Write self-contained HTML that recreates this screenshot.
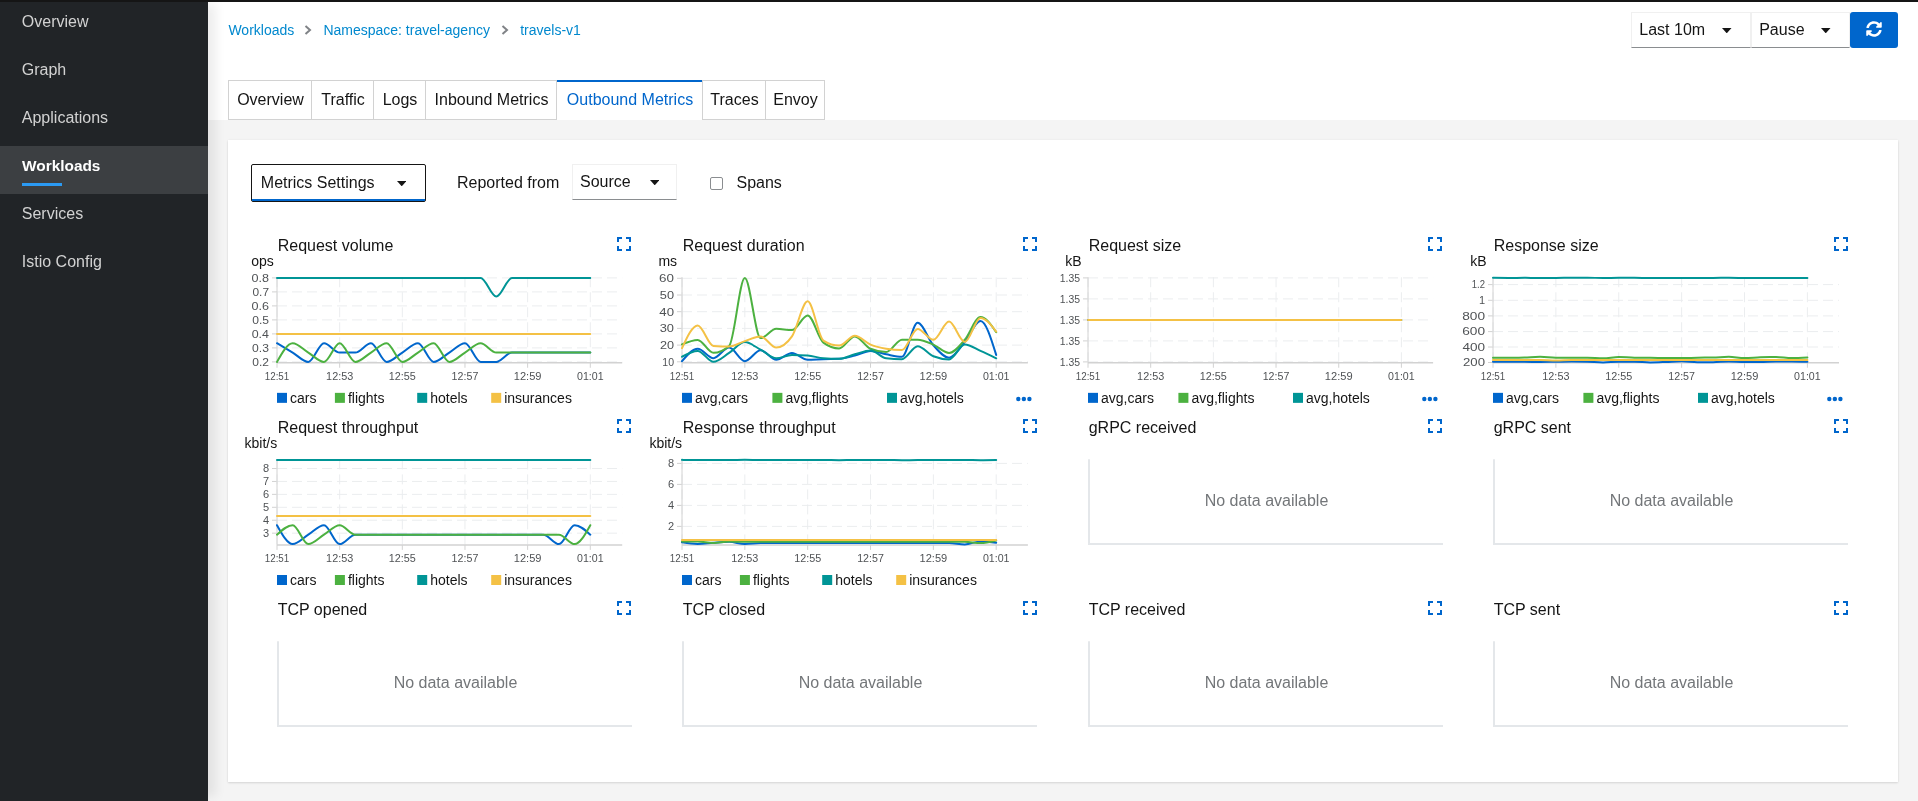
<!DOCTYPE html>
<html><head><meta charset="utf-8"><style>
html,body{margin:0;padding:0;width:1918px;height:801px;overflow:hidden;background:#f4f4f4;font-family:"Liberation Sans", sans-serif;}
.t{position:absolute;white-space:nowrap;font-size:16px;line-height:18px;}
svg text{font-family:"Liberation Sans", sans-serif;}
</style></head><body>
<div style="position:absolute;left:0;top:0;width:1918px;height:801px;will-change:transform">
<div style="position:absolute;left:208px;top:2px;width:1710px;height:118px;background:#fff"></div>
<div style="position:absolute;left:0;top:0;width:208px;height:801px;background:#212427;box-shadow:12px 0 10px -4px rgba(3,3,3,0.07)"></div>
<div style="position:absolute;left:0;top:0;width:1918px;height:2px;background:#151515"></div>
<div class="t" style="left:21.8px;top:12.8px;color:#d2d2d2">Overview</div><div class="t" style="left:21.8px;top:60.8px;color:#d2d2d2">Graph</div><div class="t" style="left:21.8px;top:108.8px;color:#d2d2d2">Applications</div><div style="position:absolute;left:0;top:146px;width:208px;height:48px;background:#3c3f42"></div><div class="t" style="left:22px;top:156.8px;color:#fff;font-weight:bold;font-size:15.4px">Workloads</div><div style="position:absolute;left:22px;top:183px;width:40px;height:3px;background:#2b9af3"></div><div class="t" style="left:21.8px;top:204.8px;color:#d2d2d2">Services</div><div class="t" style="left:21.8px;top:252.8px;color:#d2d2d2">Istio Config</div>
<div class="t" style="left:228.4px;top:21.9px;font-size:14px;line-height:16px;color:#0088ce">Workloads</div>
<div class="t" style="left:323.4px;top:21.9px;font-size:14px;line-height:16px;color:#0088ce">Namespace: travel-agency</div>
<div class="t" style="left:520.2px;top:21.9px;font-size:14px;line-height:16px;color:#0088ce">travels-v1</div>
<svg style="position:absolute;left:304px;top:25px" width="8" height="10"><path d="M1.5,1L6,5L1.5,9" fill="none" stroke="#808387" stroke-width="2"/></svg>
<svg style="position:absolute;left:501px;top:25px" width="8" height="10"><path d="M1.5,1L6,5L1.5,9" fill="none" stroke="#808387" stroke-width="2"/></svg>
<div style="position:absolute;left:1631px;top:12.4px;width:119.5px;height:35.2px;box-sizing:border-box;border:1px solid #f0f0f0;border-bottom-color:#8a8d90;background:#fff"></div>
<div class="t" style="left:1639.3px;top:21.1px;color:#151515">Last 10m</div>
<svg style="position:absolute;left:1722.2px;top:27.6px" width="9.5" height="5.3"><path d="M0,0H9.5L4.75,5.3Z" fill="#151515"/></svg>
<div style="position:absolute;left:1751.4px;top:12.4px;width:99px;height:35.2px;box-sizing:border-box;border:1px solid #f0f0f0;border-bottom-color:#8a8d90;background:#fff"></div>
<div class="t" style="left:1759.2px;top:21.1px;color:#151515">Pause</div>
<svg style="position:absolute;left:1821px;top:27.6px" width="9.5" height="5.3"><path d="M0,0H9.5L4.75,5.3Z" fill="#151515"/></svg>
<div style="position:absolute;left:1850.2px;top:12.2px;width:47.8px;height:35.6px;background:#0066cc;border-radius:3px"></div>
<svg style="position:absolute;left:1866px;top:21px" width="16" height="16" viewBox="0 0 512 512"><path fill="#fff" d="M370.72 133.28C339.458 104.008 298.888 87.962 255.848 88c-77.458.068-144.328 53.178-162.791 126.85-1.344 5.363-6.122 9.15-11.651 9.15H24.103c-7.498 0-13.194-6.807-11.807-14.176C33.933 94.924 134.813 8 256 8c66.448 0 126.791 26.136 171.315 68.685L463.03 40.97C478.149 25.851 504 36.559 504 57.941V192c0 13.255-10.745 24-24 24H345.941c-21.382 0-32.09-25.851-16.971-40.971l41.75-41.749zM32 296h134.059c21.382 0 32.09 25.851 16.971 40.971l-41.75 41.75c31.262 29.273 71.835 45.319 114.876 45.28 77.418-.07 144.315-53.144 162.787-126.849 1.344-5.363 6.122-9.15 11.651-9.15h57.304c7.498 0 13.194 6.807 11.807 14.176C478.067 417.076 377.187 504 256 504c-66.448 0-126.791-26.136-171.315-68.685L48.97 471.03C33.851 486.149 8 475.441 8 454.059V320c0-13.255 10.745-24 24-24z"/></svg>
<div style="position:absolute;left:228px;top:80px;width:597px;height:40px;box-sizing:border-box;border:1px solid #d2d2d2;background:#fff"></div><div style="position:absolute;left:311px;top:80px;width:1px;height:40px;background:#d2d2d2"></div><div style="position:absolute;left:373px;top:80px;width:1px;height:40px;background:#d2d2d2"></div><div style="position:absolute;left:425px;top:80px;width:1px;height:40px;background:#d2d2d2"></div><div style="position:absolute;left:556px;top:80px;width:1px;height:40px;background:#d2d2d2"></div><div style="position:absolute;left:702px;top:80px;width:1px;height:40px;background:#d2d2d2"></div><div style="position:absolute;left:765px;top:80px;width:1px;height:40px;background:#d2d2d2"></div><div style="position:absolute;left:557px;top:119px;width:145px;height:1px;background:#fff"></div><div style="position:absolute;left:557px;top:80px;width:145px;height:2px;background:#0066cc"></div><div class="t" style="left:228.5px;width:84px;text-align:center;top:91.0px;color:#151515">Overview</div><div class="t" style="left:311.5px;width:63px;text-align:center;top:91.0px;color:#151515">Traffic</div><div class="t" style="left:373.5px;width:53px;text-align:center;top:91.0px;color:#151515">Logs</div><div class="t" style="left:425.5px;width:132px;text-align:center;top:91.0px;color:#151515">Inbound Metrics</div><div class="t" style="left:556.5px;width:147px;text-align:center;top:91.0px;color:#0066cc">Outbound Metrics</div><div class="t" style="left:702.5px;width:64px;text-align:center;top:91.0px;color:#151515">Traces</div><div class="t" style="left:765.5px;width:60px;text-align:center;top:91.0px;color:#151515">Envoy</div>
<div style="position:absolute;left:228px;top:140px;width:1670px;height:642px;background:#fff;box-shadow:0 1px 2px 0 rgba(3,3,3,0.12),0 0 2px 0 rgba(3,3,3,0.06)"></div>
<div style="position:absolute;left:251.1px;top:164.1px;width:174.8px;height:37.5px;box-sizing:border-box;border:1px solid #151515;border-radius:2px;background:#fff"></div>
<div style="position:absolute;left:252.1px;top:199.1px;width:172.8px;height:2px;background:#0066cc"></div>
<div class="t" style="left:260.8px;top:173.9px;color:#151515">Metrics Settings</div>
<svg style="position:absolute;left:396.6px;top:181px" width="9.5" height="5.3"><path d="M0,0H9.5L4.75,5.3Z" fill="#151515"/></svg>
<div class="t" style="left:457px;top:174.0px;color:#151515">Reported from</div>
<div style="position:absolute;left:572.4px;top:164.2px;width:105.1px;height:35.5px;box-sizing:border-box;border:1px solid #f0f0f0;border-bottom-color:#8a8d90;background:#fff"></div>
<div class="t" style="left:580px;top:173.3px;color:#151515">Source</div>
<svg style="position:absolute;left:649.5px;top:180px" width="9.5" height="5.3"><path d="M0,0H9.5L4.75,5.3Z" fill="#151515"/></svg>
<div style="position:absolute;left:710.1px;top:177.2px;width:12.6px;height:12.6px;box-sizing:border-box;border:1px solid #8a8d90;border-radius:2px;background:#fff"></div>
<div class="t" style="left:736.5px;top:173.7px;color:#151515">Spans</div>
<svg style="position:absolute;left:0;top:0" width="1918" height="801">
<line x1="277.00" y1="277.90" x2="622.20" y2="277.90" stroke="#ebedef" stroke-width="1" stroke-dasharray="10,5"/>
<line x1="272.00" y1="277.90" x2="277.00" y2="277.90" stroke="#d2d2d2" stroke-width="1"/>
<text x="269.00" y="281.70" font-size="11" fill="#4f5255" text-anchor="end" font-weight="normal" textLength="17.5" lengthAdjust="spacingAndGlyphs">0.8</text>
<line x1="277.00" y1="291.90" x2="622.20" y2="291.90" stroke="#ebedef" stroke-width="1" stroke-dasharray="10,5"/>
<line x1="272.00" y1="291.90" x2="277.00" y2="291.90" stroke="#d2d2d2" stroke-width="1"/>
<text x="269.00" y="295.70" font-size="11" fill="#4f5255" text-anchor="end" font-weight="normal" textLength="16.5" lengthAdjust="spacingAndGlyphs">0.7</text>
<line x1="277.00" y1="305.90" x2="622.20" y2="305.90" stroke="#ebedef" stroke-width="1" stroke-dasharray="10,5"/>
<line x1="272.00" y1="305.90" x2="277.00" y2="305.90" stroke="#d2d2d2" stroke-width="1"/>
<text x="269.00" y="309.70" font-size="11" fill="#4f5255" text-anchor="end" font-weight="normal" textLength="17.5" lengthAdjust="spacingAndGlyphs">0.6</text>
<line x1="277.00" y1="319.90" x2="622.20" y2="319.90" stroke="#ebedef" stroke-width="1" stroke-dasharray="10,5"/>
<line x1="272.00" y1="319.90" x2="277.00" y2="319.90" stroke="#d2d2d2" stroke-width="1"/>
<text x="269.00" y="323.70" font-size="11" fill="#4f5255" text-anchor="end" font-weight="normal" textLength="16.8" lengthAdjust="spacingAndGlyphs">0.5</text>
<line x1="277.00" y1="333.90" x2="622.20" y2="333.90" stroke="#ebedef" stroke-width="1" stroke-dasharray="10,5"/>
<line x1="272.00" y1="333.90" x2="277.00" y2="333.90" stroke="#d2d2d2" stroke-width="1"/>
<text x="269.00" y="337.70" font-size="11" fill="#4f5255" text-anchor="end" font-weight="normal" textLength="17.3" lengthAdjust="spacingAndGlyphs">0.4</text>
<line x1="277.00" y1="347.90" x2="622.20" y2="347.90" stroke="#ebedef" stroke-width="1" stroke-dasharray="10,5"/>
<line x1="272.00" y1="347.90" x2="277.00" y2="347.90" stroke="#d2d2d2" stroke-width="1"/>
<text x="269.00" y="351.70" font-size="11" fill="#4f5255" text-anchor="end" font-weight="normal" textLength="16.9" lengthAdjust="spacingAndGlyphs">0.3</text>
<line x1="277.00" y1="361.90" x2="622.20" y2="361.90" stroke="#ebedef" stroke-width="1" stroke-dasharray="10,5"/>
<line x1="272.00" y1="361.90" x2="277.00" y2="361.90" stroke="#d2d2d2" stroke-width="1"/>
<text x="269.00" y="365.70" font-size="11" fill="#4f5255" text-anchor="end" font-weight="normal" textLength="16.7" lengthAdjust="spacingAndGlyphs">0.2</text>
<line x1="277.00" y1="277.25" x2="277.00" y2="362.75" stroke="#ebedef" stroke-width="1" stroke-dasharray="10,5"/>
<line x1="277.00" y1="362.75" x2="277.00" y2="367.75" stroke="#d2d2d2" stroke-width="1"/>
<text x="277.00" y="380.05" font-size="10.5" fill="#4f5255" text-anchor="middle" font-weight="normal" textLength="24.5" lengthAdjust="spacingAndGlyphs">12:51</text>
<line x1="339.66" y1="277.25" x2="339.66" y2="362.75" stroke="#ebedef" stroke-width="1" stroke-dasharray="10,5"/>
<line x1="339.66" y1="362.75" x2="339.66" y2="367.75" stroke="#d2d2d2" stroke-width="1"/>
<text x="339.66" y="380.05" font-size="10.5" fill="#4f5255" text-anchor="middle" font-weight="normal" textLength="27.1" lengthAdjust="spacingAndGlyphs">12:53</text>
<line x1="402.32" y1="277.25" x2="402.32" y2="362.75" stroke="#ebedef" stroke-width="1" stroke-dasharray="10,5"/>
<line x1="402.32" y1="362.75" x2="402.32" y2="367.75" stroke="#d2d2d2" stroke-width="1"/>
<text x="402.32" y="380.05" font-size="10.5" fill="#4f5255" text-anchor="middle" font-weight="normal" textLength="27.0" lengthAdjust="spacingAndGlyphs">12:55</text>
<line x1="464.98" y1="277.25" x2="464.98" y2="362.75" stroke="#ebedef" stroke-width="1" stroke-dasharray="10,5"/>
<line x1="464.98" y1="362.75" x2="464.98" y2="367.75" stroke="#d2d2d2" stroke-width="1"/>
<text x="464.98" y="380.05" font-size="10.5" fill="#4f5255" text-anchor="middle" font-weight="normal" textLength="26.7" lengthAdjust="spacingAndGlyphs">12:57</text>
<line x1="527.64" y1="277.25" x2="527.64" y2="362.75" stroke="#ebedef" stroke-width="1" stroke-dasharray="10,5"/>
<line x1="527.64" y1="362.75" x2="527.64" y2="367.75" stroke="#d2d2d2" stroke-width="1"/>
<text x="527.64" y="380.05" font-size="10.5" fill="#4f5255" text-anchor="middle" font-weight="normal" textLength="27.7" lengthAdjust="spacingAndGlyphs">12:59</text>
<line x1="590.30" y1="277.25" x2="590.30" y2="362.75" stroke="#ebedef" stroke-width="1" stroke-dasharray="10,5"/>
<line x1="590.30" y1="362.75" x2="590.30" y2="367.75" stroke="#d2d2d2" stroke-width="1"/>
<text x="590.30" y="380.05" font-size="10.5" fill="#4f5255" text-anchor="middle" font-weight="normal" textLength="26.6" lengthAdjust="spacingAndGlyphs">01:01</text>
<line x1="277.00" y1="277.25" x2="277.00" y2="362.75" stroke="#d2d2d2" stroke-width="1"/>
<line x1="277.00" y1="362.75" x2="622.20" y2="362.75" stroke="#d2d2d2" stroke-width="1.5"/>
<path d="M277.00,343.23C282.22,346.34 287.44,349.46 292.67,352.57C297.89,355.68 303.11,361.90 308.33,361.90C313.55,361.90 318.77,343.23 324.00,343.23C329.22,343.23 334.44,352.57 339.66,352.57C344.88,352.57 350.10,352.57 355.32,352.57C360.55,352.57 365.77,343.23 370.99,343.23C376.21,343.23 381.43,361.90 386.65,361.90C391.88,361.90 397.10,355.68 402.32,352.57C407.54,349.46 412.76,343.23 417.99,343.23C423.21,343.23 428.43,361.90 433.65,361.90C438.87,361.90 444.09,355.68 449.31,352.57C454.54,349.46 459.76,343.23 464.98,343.23C470.20,343.23 475.42,361.90 480.64,361.90C485.87,361.90 491.09,361.90 496.31,361.90C501.53,361.90 506.75,352.57 511.98,352.57C517.20,352.57 522.42,352.57 527.64,352.57C532.86,352.57 538.08,352.57 543.31,352.57C548.53,352.57 553.75,352.57 558.97,352.57C564.19,352.57 569.41,352.57 574.63,352.57C579.86,352.57 585.08,352.57 590.30,352.57" fill="none" stroke="#0066cc" stroke-width="2" stroke-linecap="round" stroke-linejoin="round"/>
<path d="M277.00,361.90C282.22,352.57 287.44,343.23 292.67,343.23C297.89,343.23 303.11,349.46 308.33,352.57C313.55,355.68 318.77,361.90 324.00,361.90C329.22,361.90 334.44,343.23 339.66,343.23C344.88,343.23 350.10,361.90 355.32,361.90C360.55,361.90 365.77,355.68 370.99,352.57C376.21,349.46 381.43,343.23 386.65,343.23C391.88,343.23 397.10,361.90 402.32,361.90C407.54,361.90 412.76,355.68 417.99,352.57C423.21,349.46 428.43,343.23 433.65,343.23C438.87,343.23 444.09,361.90 449.31,361.90C454.54,361.90 459.76,355.68 464.98,352.57C470.20,349.46 475.42,343.23 480.64,343.23C485.87,343.23 491.09,352.57 496.31,352.57C501.53,352.57 506.75,352.57 511.98,352.57C517.20,352.57 522.42,352.57 527.64,352.57C532.86,352.57 538.08,352.57 543.31,352.57C548.53,352.57 553.75,352.57 558.97,352.57C564.19,352.57 569.41,352.57 574.63,352.57C579.86,352.57 585.08,352.57 590.30,352.57" fill="none" stroke="#4cb140" stroke-width="2" stroke-linecap="round" stroke-linejoin="round"/>
<path d="M277.00,277.90C282.22,277.90 287.44,277.90 292.67,277.90C297.89,277.90 303.11,277.90 308.33,277.90C313.55,277.90 318.77,277.90 324.00,277.90C329.22,277.90 334.44,277.90 339.66,277.90C344.88,277.90 350.10,277.90 355.32,277.90C360.55,277.90 365.77,277.90 370.99,277.90C376.21,277.90 381.43,277.90 386.65,277.90C391.88,277.90 397.10,277.90 402.32,277.90C407.54,277.90 412.76,277.90 417.99,277.90C423.21,277.90 428.43,277.90 433.65,277.90C438.87,277.90 444.09,277.90 449.31,277.90C454.54,277.90 459.76,277.90 464.98,277.90C470.20,277.90 475.42,277.90 480.64,277.90C485.87,277.90 491.09,296.52 496.31,296.52C501.53,296.52 506.75,277.90 511.98,277.90C517.20,277.90 522.42,277.90 527.64,277.90C532.86,277.90 538.08,277.90 543.31,277.90C548.53,277.90 553.75,277.90 558.97,277.90C564.19,277.90 569.41,277.90 574.63,277.90C579.86,277.90 585.08,277.90 590.30,277.90" fill="none" stroke="#009596" stroke-width="2" stroke-linecap="round" stroke-linejoin="round"/>
<path d="M277.00,333.90C282.22,333.90 287.44,333.90 292.67,333.90C297.89,333.90 303.11,333.90 308.33,333.90C313.55,333.90 318.77,333.90 324.00,333.90C329.22,333.90 334.44,333.90 339.66,333.90C344.88,333.90 350.10,333.90 355.32,333.90C360.55,333.90 365.77,333.90 370.99,333.90C376.21,333.90 381.43,333.90 386.65,333.90C391.88,333.90 397.10,333.90 402.32,333.90C407.54,333.90 412.76,333.90 417.99,333.90C423.21,333.90 428.43,333.90 433.65,333.90C438.87,333.90 444.09,333.90 449.31,333.90C454.54,333.90 459.76,333.90 464.98,333.90C470.20,333.90 475.42,333.90 480.64,333.90C485.87,333.90 491.09,333.90 496.31,333.90C501.53,333.90 506.75,333.90 511.98,333.90C517.20,333.90 522.42,333.90 527.64,333.90C532.86,333.90 538.08,333.90 543.31,333.90C548.53,333.90 553.75,333.90 558.97,333.90C564.19,333.90 569.41,333.90 574.63,333.90C579.86,333.90 585.08,333.90 590.30,333.90" fill="none" stroke="#f4c145" stroke-width="2" stroke-linecap="round" stroke-linejoin="round"/>
<text x="277.70" y="250.85" font-size="16" fill="#151515" text-anchor="start" font-weight="normal" >Request volume</text>
<text x="251.20" y="266.15" font-size="14" fill="#151515" text-anchor="start" font-weight="normal" >ops</text>
<rect x="617" y="237" width="5" height="2" fill="#0066cc"/>
<rect x="617" y="237" width="2" height="5" fill="#0066cc"/>
<rect x="626" y="237" width="5" height="2" fill="#0066cc"/>
<rect x="629" y="237" width="2" height="5" fill="#0066cc"/>
<rect x="617" y="249" width="5" height="2" fill="#0066cc"/>
<rect x="617" y="246" width="2" height="5" fill="#0066cc"/>
<rect x="626" y="249" width="5" height="2" fill="#0066cc"/>
<rect x="629" y="246" width="2" height="5" fill="#0066cc"/>
<rect x="277.00" y="392.85" width="10" height="10" fill="#0066cc"/>
<text x="290.00" y="402.85" font-size="14" fill="#151515" text-anchor="start" font-weight="normal" >cars</text>
<rect x="334.90" y="392.85" width="10" height="10" fill="#4cb140"/>
<text x="347.90" y="402.85" font-size="14" fill="#151515" text-anchor="start" font-weight="normal" >flights</text>
<rect x="417.20" y="392.85" width="10" height="10" fill="#009596"/>
<text x="430.20" y="402.85" font-size="14" fill="#151515" text-anchor="start" font-weight="normal" >hotels</text>
<rect x="491.20" y="392.85" width="10" height="10" fill="#f4c145"/>
<text x="504.20" y="402.85" font-size="14" fill="#151515" text-anchor="start" font-weight="normal" >insurances</text>
<line x1="682.00" y1="278.30" x2="1027.90" y2="278.30" stroke="#ebedef" stroke-width="1" stroke-dasharray="10,5"/>
<line x1="677.00" y1="278.30" x2="682.00" y2="278.30" stroke="#d2d2d2" stroke-width="1"/>
<text x="674.00" y="282.10" font-size="11" fill="#4f5255" text-anchor="end" font-weight="normal" textLength="14.9" lengthAdjust="spacingAndGlyphs">60</text>
<line x1="682.00" y1="295.00" x2="1027.90" y2="295.00" stroke="#ebedef" stroke-width="1" stroke-dasharray="10,5"/>
<line x1="677.00" y1="295.00" x2="682.00" y2="295.00" stroke="#d2d2d2" stroke-width="1"/>
<text x="674.00" y="298.80" font-size="11" fill="#4f5255" text-anchor="end" font-weight="normal" textLength="14.2" lengthAdjust="spacingAndGlyphs">50</text>
<line x1="682.00" y1="311.70" x2="1027.90" y2="311.70" stroke="#ebedef" stroke-width="1" stroke-dasharray="10,5"/>
<line x1="677.00" y1="311.70" x2="682.00" y2="311.70" stroke="#d2d2d2" stroke-width="1"/>
<text x="674.00" y="315.50" font-size="11" fill="#4f5255" text-anchor="end" font-weight="normal" textLength="14.7" lengthAdjust="spacingAndGlyphs">40</text>
<line x1="682.00" y1="328.40" x2="1027.90" y2="328.40" stroke="#ebedef" stroke-width="1" stroke-dasharray="10,5"/>
<line x1="677.00" y1="328.40" x2="682.00" y2="328.40" stroke="#d2d2d2" stroke-width="1"/>
<text x="674.00" y="332.20" font-size="11" fill="#4f5255" text-anchor="end" font-weight="normal" textLength="14.3" lengthAdjust="spacingAndGlyphs">30</text>
<line x1="682.00" y1="345.10" x2="1027.90" y2="345.10" stroke="#ebedef" stroke-width="1" stroke-dasharray="10,5"/>
<line x1="677.00" y1="345.10" x2="682.00" y2="345.10" stroke="#d2d2d2" stroke-width="1"/>
<text x="674.00" y="348.90" font-size="11" fill="#4f5255" text-anchor="end" font-weight="normal" textLength="14.1" lengthAdjust="spacingAndGlyphs">20</text>
<line x1="682.00" y1="361.80" x2="1027.90" y2="361.80" stroke="#ebedef" stroke-width="1" stroke-dasharray="10,5"/>
<line x1="677.00" y1="361.80" x2="682.00" y2="361.80" stroke="#d2d2d2" stroke-width="1"/>
<text x="674.00" y="365.60" font-size="11" fill="#4f5255" text-anchor="end" font-weight="normal" textLength="11.7" lengthAdjust="spacingAndGlyphs">10</text>
<line x1="682.00" y1="277.25" x2="682.00" y2="362.75" stroke="#ebedef" stroke-width="1" stroke-dasharray="10,5"/>
<line x1="682.00" y1="362.75" x2="682.00" y2="367.75" stroke="#d2d2d2" stroke-width="1"/>
<text x="682.00" y="380.05" font-size="10.5" fill="#4f5255" text-anchor="middle" font-weight="normal" textLength="24.5" lengthAdjust="spacingAndGlyphs">12:51</text>
<line x1="744.84" y1="277.25" x2="744.84" y2="362.75" stroke="#ebedef" stroke-width="1" stroke-dasharray="10,5"/>
<line x1="744.84" y1="362.75" x2="744.84" y2="367.75" stroke="#d2d2d2" stroke-width="1"/>
<text x="744.84" y="380.05" font-size="10.5" fill="#4f5255" text-anchor="middle" font-weight="normal" textLength="27.1" lengthAdjust="spacingAndGlyphs">12:53</text>
<line x1="807.68" y1="277.25" x2="807.68" y2="362.75" stroke="#ebedef" stroke-width="1" stroke-dasharray="10,5"/>
<line x1="807.68" y1="362.75" x2="807.68" y2="367.75" stroke="#d2d2d2" stroke-width="1"/>
<text x="807.68" y="380.05" font-size="10.5" fill="#4f5255" text-anchor="middle" font-weight="normal" textLength="27.0" lengthAdjust="spacingAndGlyphs">12:55</text>
<line x1="870.52" y1="277.25" x2="870.52" y2="362.75" stroke="#ebedef" stroke-width="1" stroke-dasharray="10,5"/>
<line x1="870.52" y1="362.75" x2="870.52" y2="367.75" stroke="#d2d2d2" stroke-width="1"/>
<text x="870.52" y="380.05" font-size="10.5" fill="#4f5255" text-anchor="middle" font-weight="normal" textLength="26.7" lengthAdjust="spacingAndGlyphs">12:57</text>
<line x1="933.36" y1="277.25" x2="933.36" y2="362.75" stroke="#ebedef" stroke-width="1" stroke-dasharray="10,5"/>
<line x1="933.36" y1="362.75" x2="933.36" y2="367.75" stroke="#d2d2d2" stroke-width="1"/>
<text x="933.36" y="380.05" font-size="10.5" fill="#4f5255" text-anchor="middle" font-weight="normal" textLength="27.7" lengthAdjust="spacingAndGlyphs">12:59</text>
<line x1="996.20" y1="277.25" x2="996.20" y2="362.75" stroke="#ebedef" stroke-width="1" stroke-dasharray="10,5"/>
<line x1="996.20" y1="362.75" x2="996.20" y2="367.75" stroke="#d2d2d2" stroke-width="1"/>
<text x="996.20" y="380.05" font-size="10.5" fill="#4f5255" text-anchor="middle" font-weight="normal" textLength="26.6" lengthAdjust="spacingAndGlyphs">01:01</text>
<line x1="682.00" y1="277.25" x2="682.00" y2="362.75" stroke="#d2d2d2" stroke-width="1"/>
<line x1="682.00" y1="362.75" x2="1027.90" y2="362.75" stroke="#d2d2d2" stroke-width="1.5"/>
<path d="M682.00,361.13C687.24,354.95 692.47,348.77 697.71,348.77C702.95,348.77 708.18,358.13 713.42,358.13C718.66,358.13 723.89,347.44 729.13,347.44C734.37,347.44 739.60,361.13 744.84,361.13C750.08,361.13 755.31,350.28 760.55,350.28C765.79,350.28 771.02,359.80 776.26,359.80C781.50,359.80 786.73,352.95 791.97,352.95C797.21,352.95 802.44,359.80 807.68,359.80C812.92,359.80 818.15,359.29 823.39,359.13C828.63,358.96 833.86,359.02 839.10,358.79C844.34,358.57 849.57,356.93 854.81,355.62C860.05,354.31 865.28,350.94 870.52,350.94C875.76,350.94 880.99,353.31 886.23,354.29C891.47,355.26 896.70,356.79 901.94,356.79C907.18,356.79 912.41,322.72 917.65,322.72C922.89,322.72 928.12,339.42 933.36,345.27C938.60,351.11 943.83,357.79 949.07,357.79C954.31,357.79 959.54,348.05 964.78,341.93C970.02,335.80 975.25,321.05 980.49,321.05C985.73,321.05 990.96,338.00 996.20,354.95" fill="none" stroke="#0066cc" stroke-width="2" stroke-linecap="round" stroke-linejoin="round"/>
<path d="M682.00,344.43C687.24,342.18 692.47,339.92 697.71,339.92C702.95,339.92 708.18,352.78 713.42,352.78C718.66,352.78 723.89,350.50 729.13,345.94C734.37,341.37 739.60,277.97 744.84,277.97C750.08,277.97 755.31,338.09 760.55,338.09C765.79,338.09 771.02,328.73 776.26,328.73C781.50,328.73 786.73,330.07 791.97,330.07C797.21,330.07 802.44,315.54 807.68,315.54C812.92,315.54 818.15,338.70 823.39,342.60C828.63,346.49 833.86,348.44 839.10,348.44C844.34,348.44 849.57,336.42 854.81,336.42C860.05,336.42 865.28,346.55 870.52,348.77C875.76,351.00 880.99,352.11 886.23,352.11C891.47,352.11 896.70,339.76 901.94,339.76C907.18,339.76 912.41,339.76 917.65,339.76C922.89,339.76 928.12,342.40 933.36,344.60C938.60,346.80 943.83,352.95 949.07,352.95C954.31,352.95 959.54,345.77 964.78,339.76C970.02,333.74 975.25,316.88 980.49,316.88C985.73,316.88 990.96,324.56 996.20,332.24" fill="none" stroke="#4cb140" stroke-width="2" stroke-linecap="round" stroke-linejoin="round"/>
<path d="M682.00,356.79C687.24,353.87 692.47,350.94 697.71,350.94C702.95,350.94 708.18,361.80 713.42,361.80C718.66,361.80 723.89,356.23 729.13,352.95C734.37,349.66 739.60,342.09 744.84,342.09C750.08,342.09 755.31,346.91 760.55,349.61C765.79,352.31 771.02,358.29 776.26,358.29C781.50,358.29 786.73,354.95 791.97,354.95C797.21,354.95 802.44,355.12 807.68,355.45C812.92,355.79 818.15,357.96 823.39,358.29C828.63,358.63 833.86,358.79 839.10,358.79C844.34,358.79 849.57,355.68 854.81,354.29C860.05,352.89 865.28,350.44 870.52,350.44C875.76,350.44 880.99,357.74 886.23,358.29C891.47,358.85 896.70,359.13 901.94,359.13C907.18,359.13 912.41,346.27 917.65,346.27C922.89,346.27 928.12,354.17 933.36,356.29C938.60,358.40 943.83,359.46 949.07,359.46C954.31,359.46 959.54,344.43 964.78,344.43C970.02,344.43 975.25,348.63 980.49,350.94C985.73,353.26 990.96,355.77 996.20,358.29" fill="none" stroke="#009596" stroke-width="2" stroke-linecap="round" stroke-linejoin="round"/>
<path d="M682.00,348.11C687.24,336.75 692.47,325.39 697.71,325.39C702.95,325.39 708.18,345.49 713.42,345.94C718.66,346.38 723.89,346.60 729.13,346.60C734.37,346.60 739.60,342.79 744.84,341.09C750.08,339.39 755.31,336.42 760.55,336.42C765.79,336.42 771.02,347.61 776.26,347.61C781.50,347.61 786.73,343.88 791.97,336.42C797.21,328.96 802.44,301.35 807.68,301.35C812.92,301.35 818.15,337.25 823.39,340.59C828.63,343.93 833.86,345.60 839.10,345.60C844.34,345.60 849.57,335.75 854.81,335.75C860.05,335.75 865.28,342.43 870.52,344.60C875.76,346.77 880.99,347.88 886.23,348.77C891.47,349.66 896.70,350.11 901.94,350.11C907.18,350.11 912.41,328.90 917.65,328.90C922.89,328.90 928.12,339.76 933.36,339.76C938.60,339.76 943.83,321.55 949.07,321.55C954.31,321.55 959.54,341.93 964.78,341.93C970.02,341.93 975.25,317.88 980.49,317.88C985.73,317.88 990.96,324.73 996.20,331.57" fill="none" stroke="#f4c145" stroke-width="2" stroke-linecap="round" stroke-linejoin="round"/>
<text x="682.70" y="250.85" font-size="16" fill="#151515" text-anchor="start" font-weight="normal" >Request duration</text>
<text x="658.40" y="266.15" font-size="14" fill="#151515" text-anchor="start" font-weight="normal" >ms</text>
<rect x="1023" y="237" width="5" height="2" fill="#0066cc"/>
<rect x="1023" y="237" width="2" height="5" fill="#0066cc"/>
<rect x="1032" y="237" width="5" height="2" fill="#0066cc"/>
<rect x="1035" y="237" width="2" height="5" fill="#0066cc"/>
<rect x="1023" y="249" width="5" height="2" fill="#0066cc"/>
<rect x="1023" y="246" width="2" height="5" fill="#0066cc"/>
<rect x="1032" y="249" width="5" height="2" fill="#0066cc"/>
<rect x="1035" y="246" width="2" height="5" fill="#0066cc"/>
<rect x="682.00" y="392.85" width="10" height="10" fill="#0066cc"/>
<text x="695.00" y="402.85" font-size="14" fill="#151515" text-anchor="start" font-weight="normal" >avg,cars</text>
<rect x="772.40" y="392.85" width="10" height="10" fill="#4cb140"/>
<text x="785.40" y="402.85" font-size="14" fill="#151515" text-anchor="start" font-weight="normal" >avg,flights</text>
<rect x="887.00" y="392.85" width="10" height="10" fill="#009596"/>
<text x="900.00" y="402.85" font-size="14" fill="#151515" text-anchor="start" font-weight="normal" >avg,hotels</text>
<circle cx="1018.30" cy="398.95" r="2.2" fill="#0066cc"/>
<circle cx="1023.85" cy="398.95" r="2.2" fill="#0066cc"/>
<circle cx="1029.40" cy="398.95" r="2.2" fill="#0066cc"/>
<line x1="1088.00" y1="277.90" x2="1433.10" y2="277.90" stroke="#ebedef" stroke-width="1" stroke-dasharray="10,5"/>
<line x1="1083.00" y1="277.90" x2="1088.00" y2="277.90" stroke="#d2d2d2" stroke-width="1"/>
<text x="1080.00" y="281.70" font-size="11" fill="#4f5255" text-anchor="end" font-weight="normal" textLength="20.3" lengthAdjust="spacingAndGlyphs">1.35</text>
<line x1="1088.00" y1="298.90" x2="1433.10" y2="298.90" stroke="#ebedef" stroke-width="1" stroke-dasharray="10,5"/>
<line x1="1083.00" y1="298.90" x2="1088.00" y2="298.90" stroke="#d2d2d2" stroke-width="1"/>
<text x="1080.00" y="302.70" font-size="11" fill="#4f5255" text-anchor="end" font-weight="normal" textLength="20.3" lengthAdjust="spacingAndGlyphs">1.35</text>
<line x1="1088.00" y1="319.90" x2="1433.10" y2="319.90" stroke="#ebedef" stroke-width="1" stroke-dasharray="10,5"/>
<line x1="1083.00" y1="319.90" x2="1088.00" y2="319.90" stroke="#d2d2d2" stroke-width="1"/>
<text x="1080.00" y="323.70" font-size="11" fill="#4f5255" text-anchor="end" font-weight="normal" textLength="20.3" lengthAdjust="spacingAndGlyphs">1.35</text>
<line x1="1088.00" y1="340.90" x2="1433.10" y2="340.90" stroke="#ebedef" stroke-width="1" stroke-dasharray="10,5"/>
<line x1="1083.00" y1="340.90" x2="1088.00" y2="340.90" stroke="#d2d2d2" stroke-width="1"/>
<text x="1080.00" y="344.70" font-size="11" fill="#4f5255" text-anchor="end" font-weight="normal" textLength="20.3" lengthAdjust="spacingAndGlyphs">1.35</text>
<line x1="1088.00" y1="361.90" x2="1433.10" y2="361.90" stroke="#ebedef" stroke-width="1" stroke-dasharray="10,5"/>
<line x1="1083.00" y1="361.90" x2="1088.00" y2="361.90" stroke="#d2d2d2" stroke-width="1"/>
<text x="1080.00" y="365.70" font-size="11" fill="#4f5255" text-anchor="end" font-weight="normal" textLength="20.3" lengthAdjust="spacingAndGlyphs">1.35</text>
<line x1="1088.00" y1="277.25" x2="1088.00" y2="362.75" stroke="#ebedef" stroke-width="1" stroke-dasharray="10,5"/>
<line x1="1088.00" y1="362.75" x2="1088.00" y2="367.75" stroke="#d2d2d2" stroke-width="1"/>
<text x="1088.00" y="380.05" font-size="10.5" fill="#4f5255" text-anchor="middle" font-weight="normal" textLength="24.5" lengthAdjust="spacingAndGlyphs">12:51</text>
<line x1="1150.68" y1="277.25" x2="1150.68" y2="362.75" stroke="#ebedef" stroke-width="1" stroke-dasharray="10,5"/>
<line x1="1150.68" y1="362.75" x2="1150.68" y2="367.75" stroke="#d2d2d2" stroke-width="1"/>
<text x="1150.68" y="380.05" font-size="10.5" fill="#4f5255" text-anchor="middle" font-weight="normal" textLength="27.1" lengthAdjust="spacingAndGlyphs">12:53</text>
<line x1="1213.36" y1="277.25" x2="1213.36" y2="362.75" stroke="#ebedef" stroke-width="1" stroke-dasharray="10,5"/>
<line x1="1213.36" y1="362.75" x2="1213.36" y2="367.75" stroke="#d2d2d2" stroke-width="1"/>
<text x="1213.36" y="380.05" font-size="10.5" fill="#4f5255" text-anchor="middle" font-weight="normal" textLength="27.0" lengthAdjust="spacingAndGlyphs">12:55</text>
<line x1="1276.04" y1="277.25" x2="1276.04" y2="362.75" stroke="#ebedef" stroke-width="1" stroke-dasharray="10,5"/>
<line x1="1276.04" y1="362.75" x2="1276.04" y2="367.75" stroke="#d2d2d2" stroke-width="1"/>
<text x="1276.04" y="380.05" font-size="10.5" fill="#4f5255" text-anchor="middle" font-weight="normal" textLength="26.7" lengthAdjust="spacingAndGlyphs">12:57</text>
<line x1="1338.72" y1="277.25" x2="1338.72" y2="362.75" stroke="#ebedef" stroke-width="1" stroke-dasharray="10,5"/>
<line x1="1338.72" y1="362.75" x2="1338.72" y2="367.75" stroke="#d2d2d2" stroke-width="1"/>
<text x="1338.72" y="380.05" font-size="10.5" fill="#4f5255" text-anchor="middle" font-weight="normal" textLength="27.7" lengthAdjust="spacingAndGlyphs">12:59</text>
<line x1="1401.40" y1="277.25" x2="1401.40" y2="362.75" stroke="#ebedef" stroke-width="1" stroke-dasharray="10,5"/>
<line x1="1401.40" y1="362.75" x2="1401.40" y2="367.75" stroke="#d2d2d2" stroke-width="1"/>
<text x="1401.40" y="380.05" font-size="10.5" fill="#4f5255" text-anchor="middle" font-weight="normal" textLength="26.6" lengthAdjust="spacingAndGlyphs">01:01</text>
<line x1="1088.00" y1="277.25" x2="1088.00" y2="362.75" stroke="#d2d2d2" stroke-width="1"/>
<line x1="1088.00" y1="362.75" x2="1433.10" y2="362.75" stroke="#d2d2d2" stroke-width="1.5"/>
<path d="M1088.00,319.90C1093.22,319.90 1098.45,319.90 1103.67,319.90C1108.89,319.90 1114.12,319.90 1119.34,319.90C1124.56,319.90 1129.79,319.90 1135.01,319.90C1140.23,319.90 1145.46,319.90 1150.68,319.90C1155.90,319.90 1161.13,319.90 1166.35,319.90C1171.57,319.90 1176.80,319.90 1182.02,319.90C1187.24,319.90 1192.47,319.90 1197.69,319.90C1202.91,319.90 1208.14,319.90 1213.36,319.90C1218.58,319.90 1223.81,319.90 1229.03,319.90C1234.25,319.90 1239.48,319.90 1244.70,319.90C1249.92,319.90 1255.15,319.90 1260.37,319.90C1265.59,319.90 1270.82,319.90 1276.04,319.90C1281.26,319.90 1286.49,319.90 1291.71,319.90C1296.93,319.90 1302.16,319.90 1307.38,319.90C1312.60,319.90 1317.83,319.90 1323.05,319.90C1328.27,319.90 1333.50,319.90 1338.72,319.90C1343.94,319.90 1349.17,319.90 1354.39,319.90C1359.61,319.90 1364.84,319.90 1370.06,319.90C1375.28,319.90 1380.51,319.90 1385.73,319.90C1390.95,319.90 1396.18,319.90 1401.40,319.90" fill="none" stroke="#009596" stroke-width="2" stroke-linecap="round" stroke-linejoin="round"/>
<path d="M1088.00,319.90C1093.22,319.90 1098.45,319.90 1103.67,319.90C1108.89,319.90 1114.12,319.90 1119.34,319.90C1124.56,319.90 1129.79,319.90 1135.01,319.90C1140.23,319.90 1145.46,319.90 1150.68,319.90C1155.90,319.90 1161.13,319.90 1166.35,319.90C1171.57,319.90 1176.80,319.90 1182.02,319.90C1187.24,319.90 1192.47,319.90 1197.69,319.90C1202.91,319.90 1208.14,319.90 1213.36,319.90C1218.58,319.90 1223.81,319.90 1229.03,319.90C1234.25,319.90 1239.48,319.90 1244.70,319.90C1249.92,319.90 1255.15,319.90 1260.37,319.90C1265.59,319.90 1270.82,319.90 1276.04,319.90C1281.26,319.90 1286.49,319.90 1291.71,319.90C1296.93,319.90 1302.16,319.90 1307.38,319.90C1312.60,319.90 1317.83,319.90 1323.05,319.90C1328.27,319.90 1333.50,319.90 1338.72,319.90C1343.94,319.90 1349.17,319.90 1354.39,319.90C1359.61,319.90 1364.84,319.90 1370.06,319.90C1375.28,319.90 1380.51,319.90 1385.73,319.90C1390.95,319.90 1396.18,319.90 1401.40,319.90" fill="none" stroke="#f4c145" stroke-width="2" stroke-linecap="round" stroke-linejoin="round"/>
<text x="1088.70" y="250.85" font-size="16" fill="#151515" text-anchor="start" font-weight="normal" >Request size</text>
<text x="1065.30" y="266.15" font-size="14" fill="#151515" text-anchor="start" font-weight="normal" >kB</text>
<rect x="1428" y="237" width="5" height="2" fill="#0066cc"/>
<rect x="1428" y="237" width="2" height="5" fill="#0066cc"/>
<rect x="1437" y="237" width="5" height="2" fill="#0066cc"/>
<rect x="1440" y="237" width="2" height="5" fill="#0066cc"/>
<rect x="1428" y="249" width="5" height="2" fill="#0066cc"/>
<rect x="1428" y="246" width="2" height="5" fill="#0066cc"/>
<rect x="1437" y="249" width="5" height="2" fill="#0066cc"/>
<rect x="1440" y="246" width="2" height="5" fill="#0066cc"/>
<rect x="1088.00" y="392.85" width="10" height="10" fill="#0066cc"/>
<text x="1101.00" y="402.85" font-size="14" fill="#151515" text-anchor="start" font-weight="normal" >avg,cars</text>
<rect x="1178.40" y="392.85" width="10" height="10" fill="#4cb140"/>
<text x="1191.40" y="402.85" font-size="14" fill="#151515" text-anchor="start" font-weight="normal" >avg,flights</text>
<rect x="1293.00" y="392.85" width="10" height="10" fill="#009596"/>
<text x="1306.00" y="402.85" font-size="14" fill="#151515" text-anchor="start" font-weight="normal" >avg,hotels</text>
<circle cx="1424.30" cy="398.95" r="2.2" fill="#0066cc"/>
<circle cx="1429.85" cy="398.95" r="2.2" fill="#0066cc"/>
<circle cx="1435.40" cy="398.95" r="2.2" fill="#0066cc"/>
<line x1="1493.00" y1="284.60" x2="1839.00" y2="284.60" stroke="#ebedef" stroke-width="1" stroke-dasharray="10,5"/>
<line x1="1488.00" y1="284.60" x2="1493.00" y2="284.60" stroke="#d2d2d2" stroke-width="1"/>
<text x="1485.00" y="288.40" font-size="11" fill="#4f5255" text-anchor="end" font-weight="normal" textLength="13.2" lengthAdjust="spacingAndGlyphs">1.2</text>
<line x1="1493.00" y1="300.30" x2="1839.00" y2="300.30" stroke="#ebedef" stroke-width="1" stroke-dasharray="10,5"/>
<line x1="1488.00" y1="300.30" x2="1493.00" y2="300.30" stroke="#d2d2d2" stroke-width="1"/>
<text x="1485.00" y="304.10" font-size="11" fill="#4f5255" text-anchor="end" font-weight="normal" >1</text>
<line x1="1493.00" y1="315.90" x2="1839.00" y2="315.90" stroke="#ebedef" stroke-width="1" stroke-dasharray="10,5"/>
<line x1="1488.00" y1="315.90" x2="1493.00" y2="315.90" stroke="#d2d2d2" stroke-width="1"/>
<text x="1485.00" y="319.70" font-size="11" fill="#4f5255" text-anchor="end" font-weight="normal" textLength="22.8" lengthAdjust="spacingAndGlyphs">800</text>
<line x1="1493.00" y1="331.60" x2="1839.00" y2="331.60" stroke="#ebedef" stroke-width="1" stroke-dasharray="10,5"/>
<line x1="1488.00" y1="331.60" x2="1493.00" y2="331.60" stroke="#d2d2d2" stroke-width="1"/>
<text x="1485.00" y="335.40" font-size="11" fill="#4f5255" text-anchor="end" font-weight="normal" textLength="22.8" lengthAdjust="spacingAndGlyphs">600</text>
<line x1="1493.00" y1="347.00" x2="1839.00" y2="347.00" stroke="#ebedef" stroke-width="1" stroke-dasharray="10,5"/>
<line x1="1488.00" y1="347.00" x2="1493.00" y2="347.00" stroke="#d2d2d2" stroke-width="1"/>
<text x="1485.00" y="350.80" font-size="11" fill="#4f5255" text-anchor="end" font-weight="normal" textLength="22.6" lengthAdjust="spacingAndGlyphs">400</text>
<line x1="1493.00" y1="362.50" x2="1839.00" y2="362.50" stroke="#ebedef" stroke-width="1" stroke-dasharray="10,5"/>
<line x1="1488.00" y1="362.50" x2="1493.00" y2="362.50" stroke="#d2d2d2" stroke-width="1"/>
<text x="1485.00" y="366.30" font-size="11" fill="#4f5255" text-anchor="end" font-weight="normal" textLength="22.0" lengthAdjust="spacingAndGlyphs">200</text>
<line x1="1493.00" y1="277.25" x2="1493.00" y2="362.75" stroke="#ebedef" stroke-width="1" stroke-dasharray="10,5"/>
<line x1="1493.00" y1="362.75" x2="1493.00" y2="367.75" stroke="#d2d2d2" stroke-width="1"/>
<text x="1493.00" y="380.05" font-size="10.5" fill="#4f5255" text-anchor="middle" font-weight="normal" textLength="24.5" lengthAdjust="spacingAndGlyphs">12:51</text>
<line x1="1555.88" y1="277.25" x2="1555.88" y2="362.75" stroke="#ebedef" stroke-width="1" stroke-dasharray="10,5"/>
<line x1="1555.88" y1="362.75" x2="1555.88" y2="367.75" stroke="#d2d2d2" stroke-width="1"/>
<text x="1555.88" y="380.05" font-size="10.5" fill="#4f5255" text-anchor="middle" font-weight="normal" textLength="27.1" lengthAdjust="spacingAndGlyphs">12:53</text>
<line x1="1618.76" y1="277.25" x2="1618.76" y2="362.75" stroke="#ebedef" stroke-width="1" stroke-dasharray="10,5"/>
<line x1="1618.76" y1="362.75" x2="1618.76" y2="367.75" stroke="#d2d2d2" stroke-width="1"/>
<text x="1618.76" y="380.05" font-size="10.5" fill="#4f5255" text-anchor="middle" font-weight="normal" textLength="27.0" lengthAdjust="spacingAndGlyphs">12:55</text>
<line x1="1681.64" y1="277.25" x2="1681.64" y2="362.75" stroke="#ebedef" stroke-width="1" stroke-dasharray="10,5"/>
<line x1="1681.64" y1="362.75" x2="1681.64" y2="367.75" stroke="#d2d2d2" stroke-width="1"/>
<text x="1681.64" y="380.05" font-size="10.5" fill="#4f5255" text-anchor="middle" font-weight="normal" textLength="26.7" lengthAdjust="spacingAndGlyphs">12:57</text>
<line x1="1744.52" y1="277.25" x2="1744.52" y2="362.75" stroke="#ebedef" stroke-width="1" stroke-dasharray="10,5"/>
<line x1="1744.52" y1="362.75" x2="1744.52" y2="367.75" stroke="#d2d2d2" stroke-width="1"/>
<text x="1744.52" y="380.05" font-size="10.5" fill="#4f5255" text-anchor="middle" font-weight="normal" textLength="27.7" lengthAdjust="spacingAndGlyphs">12:59</text>
<line x1="1807.40" y1="277.25" x2="1807.40" y2="362.75" stroke="#ebedef" stroke-width="1" stroke-dasharray="10,5"/>
<line x1="1807.40" y1="362.75" x2="1807.40" y2="367.75" stroke="#d2d2d2" stroke-width="1"/>
<text x="1807.40" y="380.05" font-size="10.5" fill="#4f5255" text-anchor="middle" font-weight="normal" textLength="26.6" lengthAdjust="spacingAndGlyphs">01:01</text>
<line x1="1493.00" y1="277.25" x2="1493.00" y2="362.75" stroke="#d2d2d2" stroke-width="1"/>
<line x1="1493.00" y1="362.75" x2="1839.00" y2="362.75" stroke="#d2d2d2" stroke-width="1.5"/>
<path d="M1493.00,361.79C1498.24,361.79 1503.48,361.79 1508.72,361.79C1513.96,361.79 1519.20,361.79 1524.44,361.79C1529.68,361.79 1534.92,361.97 1540.16,361.97C1545.40,361.97 1550.64,361.85 1555.88,361.79C1561.12,361.74 1566.36,361.62 1571.60,361.62C1576.84,361.62 1582.08,361.68 1587.32,361.79C1592.56,361.91 1597.80,362.39 1603.04,362.39C1608.28,362.39 1613.52,361.79 1618.76,361.79C1624.00,361.79 1629.24,361.79 1634.48,361.79C1639.72,361.79 1644.96,362.39 1650.20,362.39C1655.44,362.39 1660.68,362.15 1665.92,361.97C1671.16,361.78 1676.40,361.28 1681.64,361.28C1686.88,361.28 1692.12,362.14 1697.36,362.14C1702.60,362.14 1707.84,362.14 1713.08,362.14C1718.32,362.14 1723.56,361.54 1728.80,361.54C1734.04,361.54 1739.28,361.97 1744.52,361.97C1749.76,361.97 1755.00,361.97 1760.24,361.97C1765.48,361.97 1770.72,361.54 1775.96,361.54C1781.20,361.54 1786.44,361.54 1791.68,361.54C1796.92,361.54 1802.16,361.67 1807.40,361.79" fill="none" stroke="#0066cc" stroke-width="2" stroke-linecap="round" stroke-linejoin="round"/>
<path d="M1493.00,357.86C1498.24,357.86 1503.48,357.86 1508.72,357.86C1513.96,357.86 1519.20,357.69 1524.44,357.52C1529.68,357.35 1534.92,356.84 1540.16,356.84C1545.40,356.84 1550.64,357.69 1555.88,357.69C1561.12,357.69 1566.36,357.69 1571.60,357.69C1576.84,357.69 1582.08,357.69 1587.32,357.69C1592.56,357.69 1597.80,358.29 1603.04,358.29C1608.28,358.29 1613.52,357.01 1618.76,357.01C1624.00,357.01 1629.24,357.69 1634.48,357.69C1639.72,357.69 1644.96,357.69 1650.20,357.69C1655.44,357.69 1660.68,358.12 1665.92,358.12C1671.16,358.12 1676.40,358.12 1681.64,358.12C1686.88,358.12 1692.12,357.79 1697.36,357.69C1702.60,357.59 1707.84,357.64 1713.08,357.52C1718.32,357.41 1723.56,356.84 1728.80,356.84C1734.04,356.84 1739.28,358.12 1744.52,358.12C1749.76,358.12 1755.00,357.44 1760.24,357.26C1765.48,357.09 1770.72,357.01 1775.96,357.01C1781.20,357.01 1786.44,358.12 1791.68,358.12C1796.92,358.12 1802.16,357.82 1807.40,357.52" fill="none" stroke="#4cb140" stroke-width="2" stroke-linecap="round" stroke-linejoin="round"/>
<path d="M1493.00,277.82C1498.24,277.87 1503.48,277.91 1508.72,277.91C1513.96,277.91 1519.20,277.86 1524.44,277.86C1529.68,277.86 1534.92,277.93 1540.16,277.93C1545.40,277.94 1550.64,277.94 1555.88,277.94C1561.12,277.94 1566.36,277.78 1571.60,277.77C1576.84,277.76 1582.08,277.75 1587.32,277.75C1592.56,277.75 1597.80,278.00 1603.04,278.00C1608.28,278.00 1613.52,277.83 1618.76,277.83C1624.00,277.82 1629.24,277.82 1634.48,277.82C1639.72,277.82 1644.96,278.05 1650.20,278.05C1655.44,278.05 1660.68,277.89 1665.92,277.89C1671.16,277.89 1676.40,278.00 1681.64,278.00C1686.88,278.00 1692.12,277.89 1697.36,277.89C1702.60,277.89 1707.84,277.94 1713.08,277.94C1718.32,277.94 1723.56,277.80 1728.80,277.80C1734.04,277.80 1739.28,277.90 1744.52,277.94C1749.76,277.98 1755.00,278.01 1760.24,278.01C1765.48,278.01 1770.72,277.91 1775.96,277.91C1781.20,277.91 1786.44,277.97 1791.68,277.97C1796.92,277.97 1802.16,277.96 1807.40,277.95" fill="none" stroke="#009596" stroke-width="2" stroke-linecap="round" stroke-linejoin="round"/>
<path d="M1493.00,360.09C1498.24,360.09 1503.48,360.09 1508.72,360.09C1513.96,360.09 1519.20,360.09 1524.44,360.09C1529.68,360.09 1534.92,360.09 1540.16,360.09C1545.40,360.09 1550.64,360.51 1555.88,360.51C1561.12,360.51 1566.36,360.09 1571.60,360.09C1576.84,360.09 1582.08,360.09 1587.32,360.09C1592.56,360.09 1597.80,360.09 1603.04,360.09C1608.28,360.09 1613.52,360.09 1618.76,360.09C1624.00,360.09 1629.24,360.09 1634.48,360.09C1639.72,360.09 1644.96,360.09 1650.20,360.09C1655.44,360.09 1660.68,360.09 1665.92,360.09C1671.16,360.09 1676.40,360.09 1681.64,360.09C1686.88,360.09 1692.12,360.09 1697.36,360.09C1702.60,360.09 1707.84,360.09 1713.08,360.09C1718.32,360.09 1723.56,360.09 1728.80,360.09C1734.04,360.09 1739.28,360.09 1744.52,360.09C1749.76,360.09 1755.00,360.09 1760.24,360.09C1765.48,360.09 1770.72,360.09 1775.96,360.09C1781.20,360.09 1786.44,360.09 1791.68,360.09C1796.92,360.09 1802.16,360.09 1807.40,360.09" fill="none" stroke="#f4c145" stroke-width="2" stroke-linecap="round" stroke-linejoin="round"/>
<text x="1493.70" y="250.85" font-size="16" fill="#151515" text-anchor="start" font-weight="normal" >Response size</text>
<text x="1470.30" y="266.15" font-size="14" fill="#151515" text-anchor="start" font-weight="normal" >kB</text>
<rect x="1834" y="237" width="5" height="2" fill="#0066cc"/>
<rect x="1834" y="237" width="2" height="5" fill="#0066cc"/>
<rect x="1843" y="237" width="5" height="2" fill="#0066cc"/>
<rect x="1846" y="237" width="2" height="5" fill="#0066cc"/>
<rect x="1834" y="249" width="5" height="2" fill="#0066cc"/>
<rect x="1834" y="246" width="2" height="5" fill="#0066cc"/>
<rect x="1843" y="249" width="5" height="2" fill="#0066cc"/>
<rect x="1846" y="246" width="2" height="5" fill="#0066cc"/>
<rect x="1493.00" y="392.85" width="10" height="10" fill="#0066cc"/>
<text x="1506.00" y="402.85" font-size="14" fill="#151515" text-anchor="start" font-weight="normal" >avg,cars</text>
<rect x="1583.40" y="392.85" width="10" height="10" fill="#4cb140"/>
<text x="1596.40" y="402.85" font-size="14" fill="#151515" text-anchor="start" font-weight="normal" >avg,flights</text>
<rect x="1698.00" y="392.85" width="10" height="10" fill="#009596"/>
<text x="1711.00" y="402.85" font-size="14" fill="#151515" text-anchor="start" font-weight="normal" >avg,hotels</text>
<circle cx="1829.30" cy="398.95" r="2.2" fill="#0066cc"/>
<circle cx="1834.85" cy="398.95" r="2.2" fill="#0066cc"/>
<circle cx="1840.40" cy="398.95" r="2.2" fill="#0066cc"/>
<line x1="277.00" y1="468.51" x2="622.20" y2="468.51" stroke="#ebedef" stroke-width="1" stroke-dasharray="10,5"/>
<line x1="272.00" y1="468.51" x2="277.00" y2="468.51" stroke="#d2d2d2" stroke-width="1"/>
<text x="269.00" y="472.31" font-size="11" fill="#4f5255" text-anchor="end" font-weight="normal" >8</text>
<line x1="277.00" y1="481.44" x2="622.20" y2="481.44" stroke="#ebedef" stroke-width="1" stroke-dasharray="10,5"/>
<line x1="272.00" y1="481.44" x2="277.00" y2="481.44" stroke="#d2d2d2" stroke-width="1"/>
<text x="269.00" y="485.24" font-size="11" fill="#4f5255" text-anchor="end" font-weight="normal" >7</text>
<line x1="277.00" y1="494.37" x2="622.20" y2="494.37" stroke="#ebedef" stroke-width="1" stroke-dasharray="10,5"/>
<line x1="272.00" y1="494.37" x2="277.00" y2="494.37" stroke="#d2d2d2" stroke-width="1"/>
<text x="269.00" y="498.17" font-size="11" fill="#4f5255" text-anchor="end" font-weight="normal" >6</text>
<line x1="277.00" y1="507.30" x2="622.20" y2="507.30" stroke="#ebedef" stroke-width="1" stroke-dasharray="10,5"/>
<line x1="272.00" y1="507.30" x2="277.00" y2="507.30" stroke="#d2d2d2" stroke-width="1"/>
<text x="269.00" y="511.10" font-size="11" fill="#4f5255" text-anchor="end" font-weight="normal" >5</text>
<line x1="277.00" y1="520.23" x2="622.20" y2="520.23" stroke="#ebedef" stroke-width="1" stroke-dasharray="10,5"/>
<line x1="272.00" y1="520.23" x2="277.00" y2="520.23" stroke="#d2d2d2" stroke-width="1"/>
<text x="269.00" y="524.03" font-size="11" fill="#4f5255" text-anchor="end" font-weight="normal" >4</text>
<line x1="277.00" y1="533.16" x2="622.20" y2="533.16" stroke="#ebedef" stroke-width="1" stroke-dasharray="10,5"/>
<line x1="272.00" y1="533.16" x2="277.00" y2="533.16" stroke="#d2d2d2" stroke-width="1"/>
<text x="269.00" y="536.96" font-size="11" fill="#4f5255" text-anchor="end" font-weight="normal" >3</text>
<line x1="277.00" y1="459.40" x2="277.00" y2="544.90" stroke="#ebedef" stroke-width="1" stroke-dasharray="10,5"/>
<line x1="277.00" y1="544.90" x2="277.00" y2="549.90" stroke="#d2d2d2" stroke-width="1"/>
<text x="277.00" y="562.20" font-size="10.5" fill="#4f5255" text-anchor="middle" font-weight="normal" textLength="24.5" lengthAdjust="spacingAndGlyphs">12:51</text>
<line x1="339.66" y1="459.40" x2="339.66" y2="544.90" stroke="#ebedef" stroke-width="1" stroke-dasharray="10,5"/>
<line x1="339.66" y1="544.90" x2="339.66" y2="549.90" stroke="#d2d2d2" stroke-width="1"/>
<text x="339.66" y="562.20" font-size="10.5" fill="#4f5255" text-anchor="middle" font-weight="normal" textLength="27.1" lengthAdjust="spacingAndGlyphs">12:53</text>
<line x1="402.32" y1="459.40" x2="402.32" y2="544.90" stroke="#ebedef" stroke-width="1" stroke-dasharray="10,5"/>
<line x1="402.32" y1="544.90" x2="402.32" y2="549.90" stroke="#d2d2d2" stroke-width="1"/>
<text x="402.32" y="562.20" font-size="10.5" fill="#4f5255" text-anchor="middle" font-weight="normal" textLength="27.0" lengthAdjust="spacingAndGlyphs">12:55</text>
<line x1="464.98" y1="459.40" x2="464.98" y2="544.90" stroke="#ebedef" stroke-width="1" stroke-dasharray="10,5"/>
<line x1="464.98" y1="544.90" x2="464.98" y2="549.90" stroke="#d2d2d2" stroke-width="1"/>
<text x="464.98" y="562.20" font-size="10.5" fill="#4f5255" text-anchor="middle" font-weight="normal" textLength="26.7" lengthAdjust="spacingAndGlyphs">12:57</text>
<line x1="527.64" y1="459.40" x2="527.64" y2="544.90" stroke="#ebedef" stroke-width="1" stroke-dasharray="10,5"/>
<line x1="527.64" y1="544.90" x2="527.64" y2="549.90" stroke="#d2d2d2" stroke-width="1"/>
<text x="527.64" y="562.20" font-size="10.5" fill="#4f5255" text-anchor="middle" font-weight="normal" textLength="27.7" lengthAdjust="spacingAndGlyphs">12:59</text>
<line x1="590.30" y1="459.40" x2="590.30" y2="544.90" stroke="#ebedef" stroke-width="1" stroke-dasharray="10,5"/>
<line x1="590.30" y1="544.90" x2="590.30" y2="549.90" stroke="#d2d2d2" stroke-width="1"/>
<text x="590.30" y="562.20" font-size="10.5" fill="#4f5255" text-anchor="middle" font-weight="normal" textLength="26.6" lengthAdjust="spacingAndGlyphs">01:01</text>
<line x1="277.00" y1="459.40" x2="277.00" y2="544.90" stroke="#d2d2d2" stroke-width="1"/>
<line x1="277.00" y1="544.90" x2="622.20" y2="544.90" stroke="#d2d2d2" stroke-width="1.5"/>
<path d="M277.00,525.23C282.22,534.67 287.44,544.11 292.67,544.11C297.89,544.11 303.11,537.82 308.33,534.67C313.55,531.53 318.77,525.23 324.00,525.23C329.22,525.23 334.44,544.11 339.66,544.11C344.88,544.11 350.10,534.67 355.32,534.67C360.55,534.67 365.77,534.67 370.99,534.67C376.21,534.67 381.43,534.67 386.65,534.67C391.88,534.67 397.10,534.67 402.32,534.67C407.54,534.67 412.76,534.67 417.99,534.67C423.21,534.67 428.43,534.67 433.65,534.67C438.87,534.67 444.09,534.67 449.31,534.67C454.54,534.67 459.76,534.67 464.98,534.67C470.20,534.67 475.42,534.67 480.64,534.67C485.87,534.67 491.09,534.67 496.31,534.67C501.53,534.67 506.75,534.67 511.98,534.67C517.20,534.67 522.42,534.67 527.64,534.67C532.86,534.67 538.08,534.67 543.31,534.67C548.53,534.67 553.75,544.11 558.97,544.11C564.19,544.11 569.41,525.23 574.63,525.23C579.86,525.23 585.08,529.95 590.30,534.67" fill="none" stroke="#0066cc" stroke-width="2" stroke-linecap="round" stroke-linejoin="round"/>
<path d="M277.00,534.67C282.22,529.95 287.44,525.23 292.67,525.23C297.89,525.23 303.11,544.11 308.33,544.11C313.55,544.11 318.77,537.82 324.00,534.67C329.22,531.53 334.44,525.23 339.66,525.23C344.88,525.23 350.10,534.67 355.32,534.67C360.55,534.67 365.77,534.67 370.99,534.67C376.21,534.67 381.43,534.67 386.65,534.67C391.88,534.67 397.10,534.67 402.32,534.67C407.54,534.67 412.76,534.67 417.99,534.67C423.21,534.67 428.43,534.67 433.65,534.67C438.87,534.67 444.09,534.67 449.31,534.67C454.54,534.67 459.76,534.67 464.98,534.67C470.20,534.67 475.42,534.67 480.64,534.67C485.87,534.67 491.09,534.67 496.31,534.67C501.53,534.67 506.75,534.67 511.98,534.67C517.20,534.67 522.42,534.67 527.64,534.67C532.86,534.67 538.08,534.67 543.31,534.67C548.53,534.67 553.75,534.67 558.97,534.67C564.19,534.67 569.41,544.11 574.63,544.11C579.86,544.11 585.08,534.67 590.30,525.23" fill="none" stroke="#4cb140" stroke-width="2" stroke-linecap="round" stroke-linejoin="round"/>
<path d="M277.00,460.00C282.22,460.00 287.44,460.00 292.67,460.00C297.89,460.00 303.11,460.00 308.33,460.00C313.55,460.00 318.77,460.00 324.00,460.00C329.22,460.00 334.44,460.00 339.66,460.00C344.88,460.00 350.10,460.00 355.32,460.00C360.55,460.00 365.77,460.00 370.99,460.00C376.21,460.00 381.43,460.00 386.65,460.00C391.88,460.00 397.10,460.00 402.32,460.00C407.54,460.00 412.76,460.00 417.99,460.00C423.21,460.00 428.43,460.00 433.65,460.00C438.87,460.00 444.09,460.00 449.31,460.00C454.54,460.00 459.76,460.00 464.98,460.00C470.20,460.00 475.42,460.00 480.64,460.00C485.87,460.00 491.09,460.00 496.31,460.00C501.53,460.00 506.75,460.00 511.98,460.00C517.20,460.00 522.42,460.00 527.64,460.00C532.86,460.00 538.08,460.00 543.31,460.00C548.53,460.00 553.75,460.00 558.97,460.00C564.19,460.00 569.41,460.00 574.63,460.00C579.86,460.00 585.08,460.00 590.30,460.00" fill="none" stroke="#009596" stroke-width="2" stroke-linecap="round" stroke-linejoin="round"/>
<path d="M277.00,516.00C282.22,516.00 287.44,516.00 292.67,516.00C297.89,516.00 303.11,516.00 308.33,516.00C313.55,516.00 318.77,516.00 324.00,516.00C329.22,516.00 334.44,516.00 339.66,516.00C344.88,516.00 350.10,516.00 355.32,516.00C360.55,516.00 365.77,516.00 370.99,516.00C376.21,516.00 381.43,516.00 386.65,516.00C391.88,516.00 397.10,516.00 402.32,516.00C407.54,516.00 412.76,516.00 417.99,516.00C423.21,516.00 428.43,516.00 433.65,516.00C438.87,516.00 444.09,516.00 449.31,516.00C454.54,516.00 459.76,516.00 464.98,516.00C470.20,516.00 475.42,516.00 480.64,516.00C485.87,516.00 491.09,516.00 496.31,516.00C501.53,516.00 506.75,516.00 511.98,516.00C517.20,516.00 522.42,516.00 527.64,516.00C532.86,516.00 538.08,516.00 543.31,516.00C548.53,516.00 553.75,516.00 558.97,516.00C564.19,516.00 569.41,516.00 574.63,516.00C579.86,516.00 585.08,516.00 590.30,516.00" fill="none" stroke="#f4c145" stroke-width="2" stroke-linecap="round" stroke-linejoin="round"/>
<text x="277.70" y="433.00" font-size="16" fill="#151515" text-anchor="start" font-weight="normal" >Request throughput</text>
<text x="244.50" y="448.30" font-size="14" fill="#151515" text-anchor="start" font-weight="normal" >kbit/s</text>
<rect x="617" y="419" width="5" height="2" fill="#0066cc"/>
<rect x="617" y="419" width="2" height="5" fill="#0066cc"/>
<rect x="626" y="419" width="5" height="2" fill="#0066cc"/>
<rect x="629" y="419" width="2" height="5" fill="#0066cc"/>
<rect x="617" y="431" width="5" height="2" fill="#0066cc"/>
<rect x="617" y="428" width="2" height="5" fill="#0066cc"/>
<rect x="626" y="431" width="5" height="2" fill="#0066cc"/>
<rect x="629" y="428" width="2" height="5" fill="#0066cc"/>
<rect x="277.00" y="575.00" width="10" height="10" fill="#0066cc"/>
<text x="290.00" y="585.00" font-size="14" fill="#151515" text-anchor="start" font-weight="normal" >cars</text>
<rect x="334.90" y="575.00" width="10" height="10" fill="#4cb140"/>
<text x="347.90" y="585.00" font-size="14" fill="#151515" text-anchor="start" font-weight="normal" >flights</text>
<rect x="417.20" y="575.00" width="10" height="10" fill="#009596"/>
<text x="430.20" y="585.00" font-size="14" fill="#151515" text-anchor="start" font-weight="normal" >hotels</text>
<rect x="491.20" y="575.00" width="10" height="10" fill="#f4c145"/>
<text x="504.20" y="585.00" font-size="14" fill="#151515" text-anchor="start" font-weight="normal" >insurances</text>
<line x1="682.00" y1="463.40" x2="1027.90" y2="463.40" stroke="#ebedef" stroke-width="1" stroke-dasharray="10,5"/>
<line x1="677.00" y1="463.40" x2="682.00" y2="463.40" stroke="#d2d2d2" stroke-width="1"/>
<text x="674.00" y="467.20" font-size="11" fill="#4f5255" text-anchor="end" font-weight="normal" >8</text>
<line x1="682.00" y1="484.40" x2="1027.90" y2="484.40" stroke="#ebedef" stroke-width="1" stroke-dasharray="10,5"/>
<line x1="677.00" y1="484.40" x2="682.00" y2="484.40" stroke="#d2d2d2" stroke-width="1"/>
<text x="674.00" y="488.20" font-size="11" fill="#4f5255" text-anchor="end" font-weight="normal" >6</text>
<line x1="682.00" y1="505.40" x2="1027.90" y2="505.40" stroke="#ebedef" stroke-width="1" stroke-dasharray="10,5"/>
<line x1="677.00" y1="505.40" x2="682.00" y2="505.40" stroke="#d2d2d2" stroke-width="1"/>
<text x="674.00" y="509.20" font-size="11" fill="#4f5255" text-anchor="end" font-weight="normal" >4</text>
<line x1="682.00" y1="526.40" x2="1027.90" y2="526.40" stroke="#ebedef" stroke-width="1" stroke-dasharray="10,5"/>
<line x1="677.00" y1="526.40" x2="682.00" y2="526.40" stroke="#d2d2d2" stroke-width="1"/>
<text x="674.00" y="530.20" font-size="11" fill="#4f5255" text-anchor="end" font-weight="normal" >2</text>
<line x1="682.00" y1="459.40" x2="682.00" y2="544.90" stroke="#ebedef" stroke-width="1" stroke-dasharray="10,5"/>
<line x1="682.00" y1="544.90" x2="682.00" y2="549.90" stroke="#d2d2d2" stroke-width="1"/>
<text x="682.00" y="562.20" font-size="10.5" fill="#4f5255" text-anchor="middle" font-weight="normal" textLength="24.5" lengthAdjust="spacingAndGlyphs">12:51</text>
<line x1="744.84" y1="459.40" x2="744.84" y2="544.90" stroke="#ebedef" stroke-width="1" stroke-dasharray="10,5"/>
<line x1="744.84" y1="544.90" x2="744.84" y2="549.90" stroke="#d2d2d2" stroke-width="1"/>
<text x="744.84" y="562.20" font-size="10.5" fill="#4f5255" text-anchor="middle" font-weight="normal" textLength="27.1" lengthAdjust="spacingAndGlyphs">12:53</text>
<line x1="807.68" y1="459.40" x2="807.68" y2="544.90" stroke="#ebedef" stroke-width="1" stroke-dasharray="10,5"/>
<line x1="807.68" y1="544.90" x2="807.68" y2="549.90" stroke="#d2d2d2" stroke-width="1"/>
<text x="807.68" y="562.20" font-size="10.5" fill="#4f5255" text-anchor="middle" font-weight="normal" textLength="27.0" lengthAdjust="spacingAndGlyphs">12:55</text>
<line x1="870.52" y1="459.40" x2="870.52" y2="544.90" stroke="#ebedef" stroke-width="1" stroke-dasharray="10,5"/>
<line x1="870.52" y1="544.90" x2="870.52" y2="549.90" stroke="#d2d2d2" stroke-width="1"/>
<text x="870.52" y="562.20" font-size="10.5" fill="#4f5255" text-anchor="middle" font-weight="normal" textLength="26.7" lengthAdjust="spacingAndGlyphs">12:57</text>
<line x1="933.36" y1="459.40" x2="933.36" y2="544.90" stroke="#ebedef" stroke-width="1" stroke-dasharray="10,5"/>
<line x1="933.36" y1="544.90" x2="933.36" y2="549.90" stroke="#d2d2d2" stroke-width="1"/>
<text x="933.36" y="562.20" font-size="10.5" fill="#4f5255" text-anchor="middle" font-weight="normal" textLength="27.7" lengthAdjust="spacingAndGlyphs">12:59</text>
<line x1="996.20" y1="459.40" x2="996.20" y2="544.90" stroke="#ebedef" stroke-width="1" stroke-dasharray="10,5"/>
<line x1="996.20" y1="544.90" x2="996.20" y2="549.90" stroke="#d2d2d2" stroke-width="1"/>
<text x="996.20" y="562.20" font-size="10.5" fill="#4f5255" text-anchor="middle" font-weight="normal" textLength="26.6" lengthAdjust="spacingAndGlyphs">01:01</text>
<line x1="682.00" y1="459.40" x2="682.00" y2="544.90" stroke="#d2d2d2" stroke-width="1"/>
<line x1="682.00" y1="544.90" x2="1027.90" y2="544.90" stroke="#d2d2d2" stroke-width="1.5"/>
<path d="M682.00,542.30C687.24,543.15 692.47,544.00 697.71,544.00C702.95,544.00 708.18,543.07 713.42,542.70C718.66,542.33 723.89,541.80 729.13,541.80C734.37,541.80 739.60,544.00 744.84,544.00C750.08,544.00 755.31,543.10 760.55,543.10C765.79,543.10 771.02,543.10 776.26,543.10C781.50,543.10 786.73,543.10 791.97,543.10C797.21,543.10 802.44,543.10 807.68,543.10C812.92,543.10 818.15,543.10 823.39,543.10C828.63,543.10 833.86,543.10 839.10,543.10C844.34,543.10 849.57,543.10 854.81,543.10C860.05,543.10 865.28,543.10 870.52,543.10C875.76,543.10 880.99,543.10 886.23,543.10C891.47,543.10 896.70,543.10 901.94,543.10C907.18,543.10 912.41,543.10 917.65,543.10C922.89,543.10 928.12,543.10 933.36,543.10C938.60,543.10 943.83,543.10 949.07,543.10C954.31,543.10 959.54,544.40 964.78,544.40C970.02,544.40 975.25,541.40 980.49,541.40C985.73,541.40 990.96,542.05 996.20,542.70" fill="none" stroke="#0066cc" stroke-width="2" stroke-linecap="round" stroke-linejoin="round"/>
<path d="M682.00,541.60C687.24,541.50 692.47,541.40 697.71,541.40C702.95,541.40 708.18,543.00 713.42,543.00C718.66,543.00 723.89,541.50 729.13,541.50C734.37,541.50 739.60,541.80 744.84,541.80C750.08,541.80 755.31,541.80 760.55,541.80C765.79,541.80 771.02,541.80 776.26,541.80C781.50,541.80 786.73,541.80 791.97,541.80C797.21,541.80 802.44,541.80 807.68,541.80C812.92,541.80 818.15,541.80 823.39,541.80C828.63,541.80 833.86,541.80 839.10,541.80C844.34,541.80 849.57,541.80 854.81,541.80C860.05,541.80 865.28,541.80 870.52,541.80C875.76,541.80 880.99,541.80 886.23,541.80C891.47,541.80 896.70,541.80 901.94,541.80C907.18,541.80 912.41,541.80 917.65,541.80C922.89,541.80 928.12,541.80 933.36,541.80C938.60,541.80 943.83,541.80 949.07,541.80C954.31,541.80 959.54,541.80 964.78,541.80C970.02,541.80 975.25,543.10 980.49,543.10C985.73,543.10 990.96,541.80 996.20,540.50" fill="none" stroke="#4cb140" stroke-width="2" stroke-linecap="round" stroke-linejoin="round"/>
<path d="M682.00,459.87C687.24,459.97 692.47,460.08 697.71,460.08C702.95,460.08 708.18,460.05 713.42,460.03C718.66,460.00 723.89,459.97 729.13,459.94C734.37,459.91 739.60,459.86 744.84,459.86C750.08,459.86 755.31,460.11 760.55,460.11C765.79,460.11 771.02,459.99 776.26,459.99C781.50,459.99 786.73,460.05 791.97,460.07C797.21,460.09 802.44,460.11 807.68,460.11C812.92,460.11 818.15,460.06 823.39,460.06C828.63,460.06 833.86,460.13 839.10,460.13C844.34,460.13 849.57,459.97 854.81,459.97C860.05,459.97 865.28,460.09 870.52,460.09C875.76,460.09 880.99,459.98 886.23,459.98C891.47,459.98 896.70,460.13 901.94,460.13C907.18,460.13 912.41,460.13 917.65,460.11C922.89,460.10 928.12,459.88 933.36,459.88C938.60,459.88 943.83,459.88 949.07,459.89C954.31,459.90 959.54,459.90 964.78,459.92C970.02,459.93 975.25,460.14 980.49,460.14C985.73,460.14 990.96,460.06 996.20,459.98" fill="none" stroke="#009596" stroke-width="2" stroke-linecap="round" stroke-linejoin="round"/>
<path d="M682.00,540.10C687.24,540.10 692.47,540.10 697.71,540.10C702.95,540.10 708.18,540.10 713.42,540.10C718.66,540.10 723.89,540.10 729.13,540.10C734.37,540.10 739.60,540.10 744.84,540.10C750.08,540.10 755.31,540.10 760.55,540.10C765.79,540.10 771.02,540.10 776.26,540.10C781.50,540.10 786.73,540.10 791.97,540.10C797.21,540.10 802.44,540.10 807.68,540.10C812.92,540.10 818.15,540.10 823.39,540.10C828.63,540.10 833.86,540.10 839.10,540.10C844.34,540.10 849.57,540.10 854.81,540.10C860.05,540.10 865.28,540.10 870.52,540.10C875.76,540.10 880.99,540.10 886.23,540.10C891.47,540.10 896.70,540.10 901.94,540.10C907.18,540.10 912.41,540.10 917.65,540.10C922.89,540.10 928.12,540.10 933.36,540.10C938.60,540.10 943.83,540.10 949.07,540.10C954.31,540.10 959.54,540.10 964.78,540.10C970.02,540.10 975.25,540.10 980.49,540.10C985.73,540.10 990.96,540.10 996.20,540.10" fill="none" stroke="#f4c145" stroke-width="2" stroke-linecap="round" stroke-linejoin="round"/>
<text x="682.70" y="433.00" font-size="16" fill="#151515" text-anchor="start" font-weight="normal" >Response throughput</text>
<text x="649.40" y="448.30" font-size="14" fill="#151515" text-anchor="start" font-weight="normal" >kbit/s</text>
<rect x="1023" y="419" width="5" height="2" fill="#0066cc"/>
<rect x="1023" y="419" width="2" height="5" fill="#0066cc"/>
<rect x="1032" y="419" width="5" height="2" fill="#0066cc"/>
<rect x="1035" y="419" width="2" height="5" fill="#0066cc"/>
<rect x="1023" y="431" width="5" height="2" fill="#0066cc"/>
<rect x="1023" y="428" width="2" height="5" fill="#0066cc"/>
<rect x="1032" y="431" width="5" height="2" fill="#0066cc"/>
<rect x="1035" y="428" width="2" height="5" fill="#0066cc"/>
<rect x="682.00" y="575.00" width="10" height="10" fill="#0066cc"/>
<text x="695.00" y="585.00" font-size="14" fill="#151515" text-anchor="start" font-weight="normal" >cars</text>
<rect x="739.90" y="575.00" width="10" height="10" fill="#4cb140"/>
<text x="752.90" y="585.00" font-size="14" fill="#151515" text-anchor="start" font-weight="normal" >flights</text>
<rect x="822.20" y="575.00" width="10" height="10" fill="#009596"/>
<text x="835.20" y="585.00" font-size="14" fill="#151515" text-anchor="start" font-weight="normal" >hotels</text>
<rect x="896.20" y="575.00" width="10" height="10" fill="#f4c145"/>
<text x="909.20" y="585.00" font-size="14" fill="#151515" text-anchor="start" font-weight="normal" >insurances</text>
<text x="1088.70" y="433.00" font-size="16" fill="#151515" text-anchor="start" font-weight="normal" >gRPC received</text>
<rect x="1428" y="419" width="5" height="2" fill="#0066cc"/>
<rect x="1428" y="419" width="2" height="5" fill="#0066cc"/>
<rect x="1437" y="419" width="5" height="2" fill="#0066cc"/>
<rect x="1440" y="419" width="2" height="5" fill="#0066cc"/>
<rect x="1428" y="431" width="5" height="2" fill="#0066cc"/>
<rect x="1428" y="428" width="2" height="5" fill="#0066cc"/>
<rect x="1437" y="431" width="5" height="2" fill="#0066cc"/>
<rect x="1440" y="428" width="2" height="5" fill="#0066cc"/>
<line x1="1089.00" y1="459.20" x2="1089.00" y2="543.90" stroke="#e4e7ea" stroke-width="2"/>
<line x1="1088.00" y1="543.90" x2="1443.00" y2="543.90" stroke="#e4e7ea" stroke-width="2"/>
<text x="1266.50" y="506.30" font-size="16" fill="#737679" text-anchor="middle" font-weight="normal" >No data available</text>
<text x="1493.70" y="433.00" font-size="16" fill="#151515" text-anchor="start" font-weight="normal" >gRPC sent</text>
<rect x="1834" y="419" width="5" height="2" fill="#0066cc"/>
<rect x="1834" y="419" width="2" height="5" fill="#0066cc"/>
<rect x="1843" y="419" width="5" height="2" fill="#0066cc"/>
<rect x="1846" y="419" width="2" height="5" fill="#0066cc"/>
<rect x="1834" y="431" width="5" height="2" fill="#0066cc"/>
<rect x="1834" y="428" width="2" height="5" fill="#0066cc"/>
<rect x="1843" y="431" width="5" height="2" fill="#0066cc"/>
<rect x="1846" y="428" width="2" height="5" fill="#0066cc"/>
<line x1="1494.00" y1="459.20" x2="1494.00" y2="543.90" stroke="#e4e7ea" stroke-width="2"/>
<line x1="1493.00" y1="543.90" x2="1848.00" y2="543.90" stroke="#e4e7ea" stroke-width="2"/>
<text x="1671.50" y="506.30" font-size="16" fill="#737679" text-anchor="middle" font-weight="normal" >No data available</text>
<text x="277.70" y="615.15" font-size="16" fill="#151515" text-anchor="start" font-weight="normal" >TCP opened</text>
<rect x="617" y="601" width="5" height="2" fill="#0066cc"/>
<rect x="617" y="601" width="2" height="5" fill="#0066cc"/>
<rect x="626" y="601" width="5" height="2" fill="#0066cc"/>
<rect x="629" y="601" width="2" height="5" fill="#0066cc"/>
<rect x="617" y="613" width="5" height="2" fill="#0066cc"/>
<rect x="617" y="610" width="2" height="5" fill="#0066cc"/>
<rect x="626" y="613" width="5" height="2" fill="#0066cc"/>
<rect x="629" y="610" width="2" height="5" fill="#0066cc"/>
<line x1="278.00" y1="641.35" x2="278.00" y2="726.05" stroke="#e4e7ea" stroke-width="2"/>
<line x1="277.00" y1="726.05" x2="632.00" y2="726.05" stroke="#e4e7ea" stroke-width="2"/>
<text x="455.50" y="688.45" font-size="16" fill="#737679" text-anchor="middle" font-weight="normal" >No data available</text>
<text x="682.70" y="615.15" font-size="16" fill="#151515" text-anchor="start" font-weight="normal" >TCP closed</text>
<rect x="1023" y="601" width="5" height="2" fill="#0066cc"/>
<rect x="1023" y="601" width="2" height="5" fill="#0066cc"/>
<rect x="1032" y="601" width="5" height="2" fill="#0066cc"/>
<rect x="1035" y="601" width="2" height="5" fill="#0066cc"/>
<rect x="1023" y="613" width="5" height="2" fill="#0066cc"/>
<rect x="1023" y="610" width="2" height="5" fill="#0066cc"/>
<rect x="1032" y="613" width="5" height="2" fill="#0066cc"/>
<rect x="1035" y="610" width="2" height="5" fill="#0066cc"/>
<line x1="683.00" y1="641.35" x2="683.00" y2="726.05" stroke="#e4e7ea" stroke-width="2"/>
<line x1="682.00" y1="726.05" x2="1037.00" y2="726.05" stroke="#e4e7ea" stroke-width="2"/>
<text x="860.50" y="688.45" font-size="16" fill="#737679" text-anchor="middle" font-weight="normal" >No data available</text>
<text x="1088.70" y="615.15" font-size="16" fill="#151515" text-anchor="start" font-weight="normal" >TCP received</text>
<rect x="1428" y="601" width="5" height="2" fill="#0066cc"/>
<rect x="1428" y="601" width="2" height="5" fill="#0066cc"/>
<rect x="1437" y="601" width="5" height="2" fill="#0066cc"/>
<rect x="1440" y="601" width="2" height="5" fill="#0066cc"/>
<rect x="1428" y="613" width="5" height="2" fill="#0066cc"/>
<rect x="1428" y="610" width="2" height="5" fill="#0066cc"/>
<rect x="1437" y="613" width="5" height="2" fill="#0066cc"/>
<rect x="1440" y="610" width="2" height="5" fill="#0066cc"/>
<line x1="1089.00" y1="641.35" x2="1089.00" y2="726.05" stroke="#e4e7ea" stroke-width="2"/>
<line x1="1088.00" y1="726.05" x2="1443.00" y2="726.05" stroke="#e4e7ea" stroke-width="2"/>
<text x="1266.50" y="688.45" font-size="16" fill="#737679" text-anchor="middle" font-weight="normal" >No data available</text>
<text x="1493.70" y="615.15" font-size="16" fill="#151515" text-anchor="start" font-weight="normal" >TCP sent</text>
<rect x="1834" y="601" width="5" height="2" fill="#0066cc"/>
<rect x="1834" y="601" width="2" height="5" fill="#0066cc"/>
<rect x="1843" y="601" width="5" height="2" fill="#0066cc"/>
<rect x="1846" y="601" width="2" height="5" fill="#0066cc"/>
<rect x="1834" y="613" width="5" height="2" fill="#0066cc"/>
<rect x="1834" y="610" width="2" height="5" fill="#0066cc"/>
<rect x="1843" y="613" width="5" height="2" fill="#0066cc"/>
<rect x="1846" y="610" width="2" height="5" fill="#0066cc"/>
<line x1="1494.00" y1="641.35" x2="1494.00" y2="726.05" stroke="#e4e7ea" stroke-width="2"/>
<line x1="1493.00" y1="726.05" x2="1848.00" y2="726.05" stroke="#e4e7ea" stroke-width="2"/>
<text x="1671.50" y="688.45" font-size="16" fill="#737679" text-anchor="middle" font-weight="normal" >No data available</text>
</svg>
</div>
</body></html>
